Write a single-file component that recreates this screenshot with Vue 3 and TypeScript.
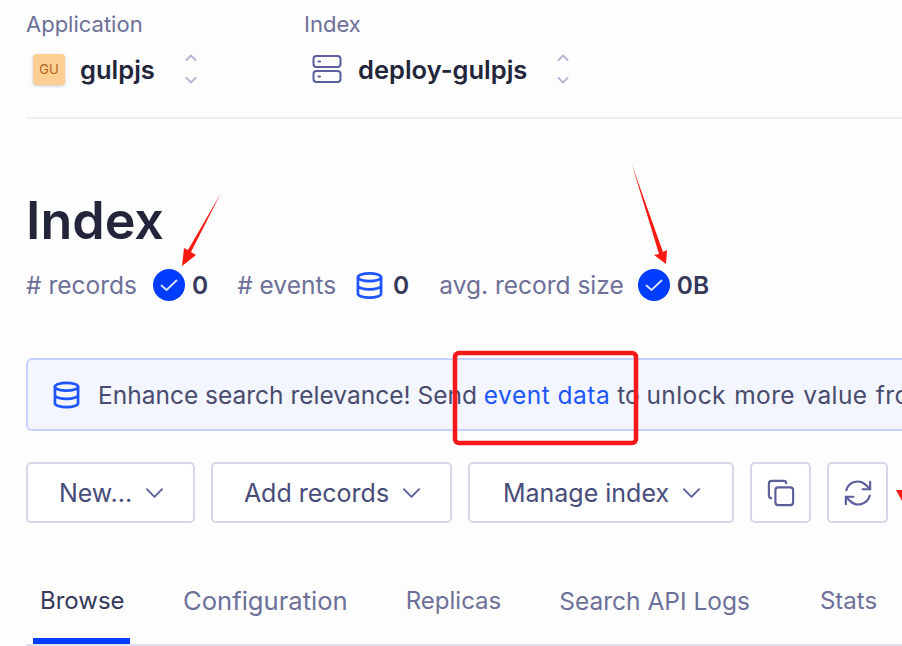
<script setup lang="ts">
const tabs: string[] = ['Browse', 'Configuration', 'Replicas', 'Search API Logs', 'Stats']
</script>

<template>
  <div class="page">
    <header class="crumbs">
      <div class="crumb app">
        <span class="crumb-label">Application</span>
        <div class="crumb-value">
          <span class="avatar">GU</span>
          <strong>gulpjs</strong>
          <svg class="updown" viewBox="0 0 14 32" fill="none" stroke="#b6b7d5" stroke-width="2" stroke-linecap="round" stroke-linejoin="round"><path d="M2.5 7 7 2.5 11.500 7M2.500 25 7 29.500 11.500 25" /></svg>
        </div>
      </div>
      <div class="crumb idx">
        <span class="crumb-label">Index</span>
        <div class="crumb-value">
          <svg class="server" viewBox="0 0 30 30" fill="none" stroke="#5a5e9a" stroke-width="2" stroke-linecap="round"><rect x="1.500" y="2" width="27" height="11" rx="3" /><rect x="1.500" y="17" width="27" height="11" rx="3" /><path d="M6.500 7.500h1.500M6.500 22.500h1.500" /></svg>
          <strong>deploy-gulpjs</strong>
          <svg class="updown" viewBox="0 0 14 32" fill="none" stroke="#b6b7d5" stroke-width="2" stroke-linecap="round" stroke-linejoin="round"><path d="M2.5 7 7 2.5 11.500 7M2.500 25 7 29.500 11.500 25" /></svg>
        </div>
      </div>
    </header>

    <h1>Index</h1>

    <div class="stats">
      <span class="stat-label">#&nbsp;records</span>
      <svg class="check" viewBox="0 0 32 32"><circle cx="16" cy="16" r="16" fill="#003dff" /><path d="M8.500 16.500l5 4.500 10-9.500" fill="none" stroke="#fff" stroke-width="1.800" stroke-linecap="round" stroke-linejoin="round" opacity=".85" /></svg>
      <b class="first">0</b>
      <span class="stat-label events">#&nbsp;events</span>
      <svg class="db" viewBox="0 0 28 28" fill="none" stroke="#1f55ff" stroke-width="2.800"><ellipse cx="14" cy="5.500" rx="12" ry="4" /><path d="M2 5.500v17c0 2.200 5.400 4 12 4s12-1.800 12-4v-17M2 14c0 2.200 5.400 4 12 4s12-1.800 12-4" /></svg>
      <b class="second">0</b>
      <span class="stat-label avg">avg. record size</span>
      <svg class="check" viewBox="0 0 32 32"><circle cx="16" cy="16" r="16" fill="#003dff" /><path d="M8.500 16.500l5 4.500 10-9.500" fill="none" stroke="#fff" stroke-width="1.800" stroke-linecap="round" stroke-linejoin="round" opacity=".85" /></svg>
      <b class="first">0B</b>
    </div>

    <div class="banner">
      <svg class="db" viewBox="0 0 28 28" fill="none" stroke="#1f55ff" stroke-width="2.800"><ellipse cx="14" cy="5.500" rx="12" ry="4" /><path d="M2 5.500v17c0 2.200 5.400 4 12 4s12-1.800 12-4v-17M2 14c0 2.200 5.400 4 12 4s12-1.800 12-4" /></svg>
      <span class="banner-text">Enhance search relevance! Send <a>event data</a> to <span class="tail">unlock more value fro</span></span>
    </div>

    <div class="actions">
      <button class="btn new">New...<svg class="chev" viewBox="0 0 20 12" fill="none" stroke="#5a5e9a" stroke-width="2" stroke-linecap="round" stroke-linejoin="round"><path d="M2 2l8 8 8-8" /></svg></button>
      <button class="btn add">Add records<svg class="chev" viewBox="0 0 20 12" fill="none" stroke="#5a5e9a" stroke-width="2" stroke-linecap="round" stroke-linejoin="round"><path d="M2 2l8 8 8-8" /></svg></button>
      <button class="btn manage">Manage index<svg class="chev" viewBox="0 0 20 12" fill="none" stroke="#5a5e9a" stroke-width="2" stroke-linecap="round" stroke-linejoin="round"><path d="M2 2l8 8 8-8" /></svg></button>
      <button class="btn square">
        <svg class="tool" viewBox="0 0 30 30" fill="none" stroke="#5a5e9a" stroke-width="2.300" stroke-linecap="round" stroke-linejoin="round"><rect x="9" y="9" width="19" height="19" rx="3" /><path d="M4.500 20.500C3 20.500 2 19.500 2 18V5c0-1.700 1.300-3 3-3h13c1.500 0 2.500 1 2.500 2.500" /></svg>
      </button>
      <button class="btn square">
        <svg class="tool" viewBox="0 0 30 30" fill="none" stroke="#5a5e9a" stroke-width="2.300" stroke-linecap="round" stroke-linejoin="round"><path d="M28 3v8h-8M2 27v-8h8" /><path d="M2.500 12A12.500 12.500 0 0 1 23 6l5 5M27.500 18A12.500 12.500 0 0 1 7 24l-5-5" /></svg>
      </button>
    </div>

    <nav class="tabs">
      <span v-for="(tab, i) in tabs" :key="tab" class="tab" :class="{ active: i === 0, last: i === 4 }">{{ tab }}</span>
    </nav>

    <svg class="marks" viewBox="0 0 902 646" fill="#fa1a12">
      <path d="M221 193 191 252 196 255 182 266 184 248 188 250Z" />
      <path d="M632 165 663 252 667 250 666 264 654 255 659 254Z" />
      <path d="M896 490h6v11Z" />
      <rect x="455" y="353" width="181" height="90" rx="4" fill="none" stroke="#f5191a" stroke-width="4.500" />
    </svg>
  </div>
</template>

<style>
html, body { margin: 0; background: #fdfdfe; }
</style>

<style scoped>
.page {
  position: relative;
  box-sizing: border-box;
  width: 902px;
  height: 646px;
  overflow: hidden;
  padding: 12px 0 0 26px;
  font-family: Inter, "Noto Sans", sans-serif;
  color: #23263b;
  background: #fdfdfe;
}
.crumbs {
  display: flex;
  height: 107px;
  margin-right: -10px;
  border-bottom: 2px solid #eeeef6;
  box-sizing: border-box;
}
.crumb { display: flex; flex-direction: column; }
.app { width: 278px; }
.crumb-label { font-size: 22px; line-height: 24px; color: #6d7099; }
.crumb-value { display: flex; align-items: center; height: 44px; margin-top: 11px; }
.crumb-value strong { font-size: 25.500px; font-weight: 600; color: #23263b; }
.avatar {
  display: flex; align-items: center; justify-content: center;
  width: 32px; height: 31px; margin: 0 15px 0 7px;
  border-radius: 4px; background: #fdcf92; color: #b5651d;
  font-size: 13px; box-shadow: 0 1px 3px rgba(35, 38, 59, .25);
}
.server { width: 30px; height: 30px; margin: 0 16px 0 8px; }
.updown { width: 14px; height: 32px; margin-left: 29px; }
h1 {
  margin: 66px 0 0;
  font-size: 52px;
  line-height: 72px;
  font-weight: 600;
  color: #23263b;
}
.stats { display: flex; align-items: center; height: 32px; margin-top: 12px; font-size: 24.500px; }
.stats b { font-weight: 600; color: #36395a; }
.stat-label { color: #6d7099; }
.stats .check { width: 32px; height: 32px; margin-left: 16px; }
.first { margin-left: 7px; }
.events { margin-left: 29px; }
.stats .db { width: 27px; height: 27px; margin-left: 20px; }
.second { margin-left: 10px; }
.avg { margin-left: 30px; margin-right: -2px; }
.banner {
  display: flex; align-items: center;
  height: 73px; margin-top: 57px; margin-right: -20px; padding-left: 25px;
  box-sizing: border-box; white-space: nowrap;
  border: 2px solid #c5d4ff; border-radius: 6px; background: #f3f5ff;
}
.banner .db { width: 27px; height: 28px; flex: none; }
.banner-text { margin-left: 18px; font-size: 24.500px; color: #484c6e; }
.banner-text a { color: #1f55ff; letter-spacing: .5px; }
.tail { letter-spacing: .4px; word-spacing: 1px; }
.actions { display: flex; gap: 16px; margin-top: 31px; }
.btn {
  display: flex; align-items: center; justify-content: center;
  height: 61px; padding: 0 0 0 2px; box-sizing: border-box;
  border: 2px solid #d6d6e7; border-radius: 5px; background: #fff;
  font: inherit; font-size: 25px; color: #484c7a;
}
.new { width: 169px; }
.add { width: 241px; }
.manage { width: 266px; }
.square { width: 61px; padding: 0; }
.chev { width: 19px; height: 12px; margin-left: 13px; }
.tool { width: 28px; height: 28px; }
.tabs {
  display: flex; height: 93px; margin-top: 30px; margin-right: -10px; padding-left: 7px;
  box-sizing: border-box; border-bottom: 2px solid #dfe0ee; white-space: nowrap;
}
.tab {
  box-sizing: border-box; padding: 32px 0 0 0; margin-left: 58px;
  font-size: 24px; line-height: 32px; color: #6d7099;
}
.tab:nth-child(2) { font-size: 25.600px; }
.tab:nth-child(4) { font-size: 24.500px; }
.tab.active { width: 97px; margin-left: 0; padding-left: 7px; color: #36395a; border-bottom: 6px solid #003dff; height: 91px; }
.tab.active + .tab { margin-left: 53px; }
.tab.last { margin-left: 70px; }
.marks { position: absolute; inset: 0; width: 902px; height: 646px; pointer-events: none; }
</style>
